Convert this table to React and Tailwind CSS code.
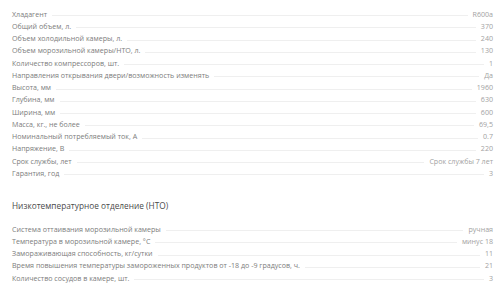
import React from "react";

const MAIN_SPECS = [
  ["Хладагент", "R600a"],
  ["Общий объем, л.", "370"],
  ["Объем холодильной камеры, л.", "240"],
  ["Объем морозильной камеры/НТО, л.", "130"],
  ["Количество компрессоров, шт.", "1"],
  ["Направления открывания двери/возможность изменять", "Да"],
  ["Высота, мм", "1960"],
  ["Глубина, мм", "630"],
  ["Ширина, мм", "600"],
  ["Масса, кг., не более", "69,5"],
  ["Номинальный потребляемый ток, А", "0.7"],
  ["Напряжение, В", "220"],
  ["Срок службы, лет", "Срок службы 7 лет"],
  ["Гарантия, год", "3"],
];

const FREEZER_SPECS = [
  ["Система оттаивания морозильной камеры", "ручная"],
  ["Температура в морозильной камере, °С", "минус 18"],
  ["Замораживающая способность, кг/сутки", "11"],
  ["Время повышения температуры замороженных продуктов от -18 до -9 градусов, ч.", "21"],
  ["Количество сосудов в камере, шт.", "3"],
];

function SpecRow({ label, value }) {
  return (
    <div className="flex items-center h-[12.25px] text-[7.1px] leading-[9px]">
      <span className="text-[#7c7c7c] whitespace-nowrap">{label}</span>
      <span className="flex-1 mx-[5px] mt-[3px] border-b border-[#efefef]" />
      <span className="text-[#a2a2a2] whitespace-nowrap">{value}</span>
    </div>
  );
}

export default function App() {
  return (
    <div
      className="w-[500px] h-[290px] bg-white overflow-hidden pl-[12px] pr-[7px] pt-[8px]"
      style={{ fontFamily: '"Open Sans", "Noto Sans", sans-serif' }}
    >
      <div>
        {MAIN_SPECS.map(([l, v]) => (
          <SpecRow key={l} label={l} value={v} />
        ))}
      </div>
      <h2 className="mt-[20px] text-[8.3px] leading-[12px] text-[#4a4a4a]">
        Низкотемпературное отделение (НТО)
      </h2>
      <div className="mt-[11.5px]">
        {FREEZER_SPECS.map(([l, v]) => (
          <SpecRow key={l} label={l} value={v} />
        ))}
      </div>
    </div>
  );
}
